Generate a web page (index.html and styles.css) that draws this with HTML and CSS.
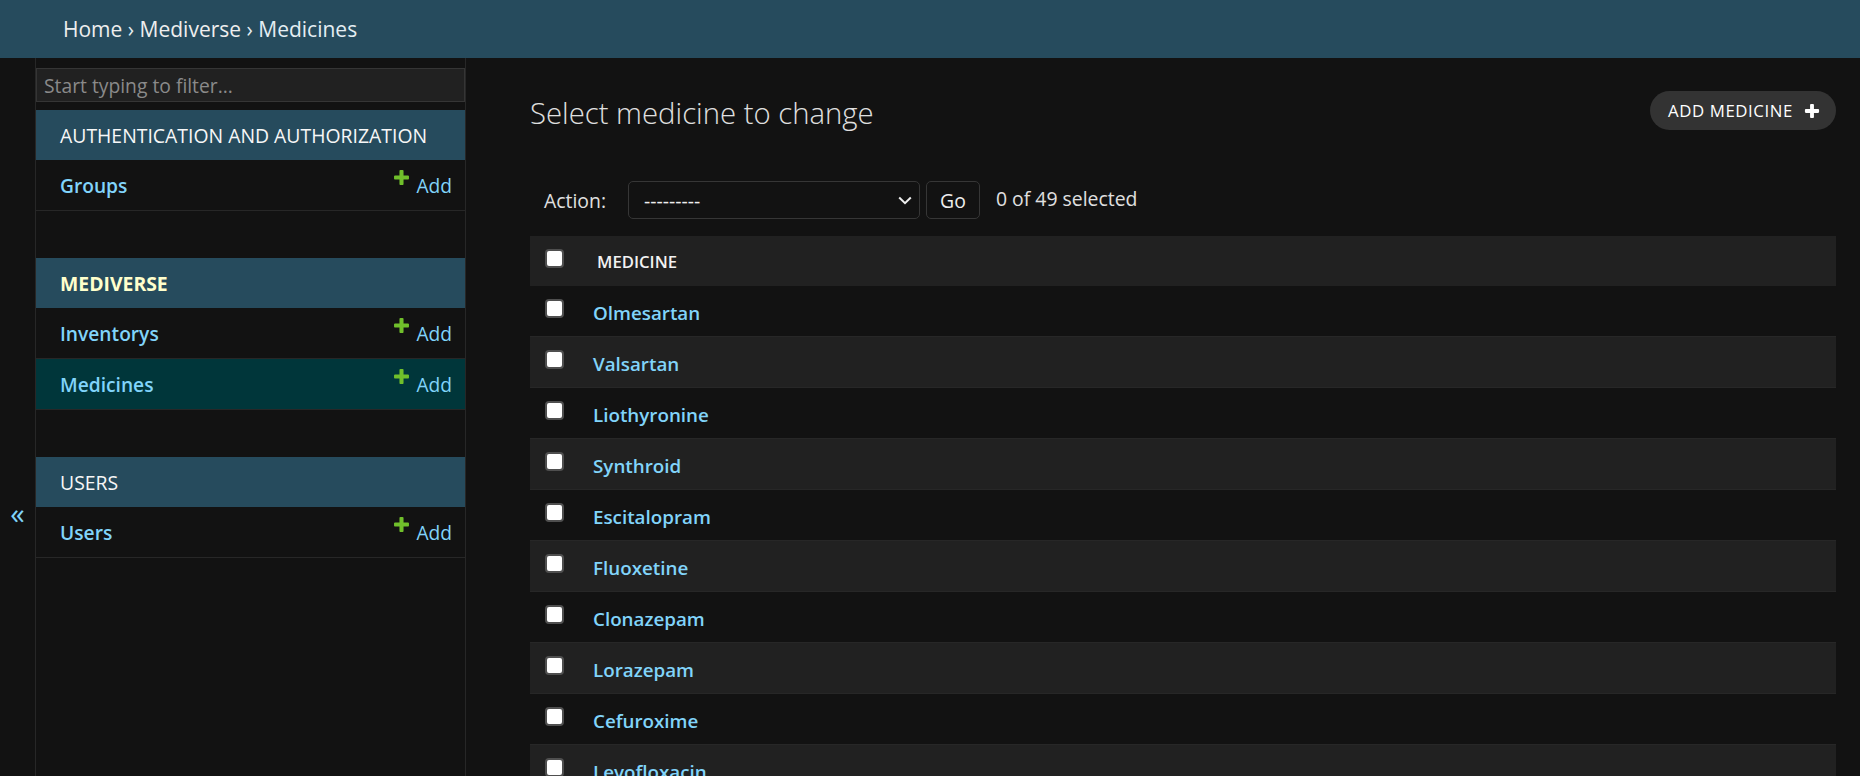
FILE: index.html
```html
<!DOCTYPE html>
<html lang="en">
<head>
<meta charset="utf-8">
<title>Select medicine to change</title>
<link rel="stylesheet" href="styles.css">
</head>
<body>
<div class="breadcrumbs"><a href="#">Home</a> › <a href="#">Mediverse</a> › Medicines</div>
<div class="main">
  <button class="toggle" type="button">«</button>
  <nav class="sidebar">
    <input class="nav-filter" type="search" placeholder="Start typing to filter...">
    <div class="module">
      <div class="caption">AUTHENTICATION AND AUTHORIZATION</div>
      <div class="row"><a class="model" href="#">Groups</a><a class="addlink" href="#"><svg class="plus" viewBox="0 0 1792 1792"><path d="M1600 796v192q0 40-28 68t-68 28h-416v416q0 40-28 68t-68 28h-192q-40 0-68-28t-28-68v-416h-416q-40 0-68-28t-28-68v-192q0-40 28-68t68-28h416v-416q0-40 28-68t68-28h192q40 0 68 28t28 68v416h416q40 0 68 28t28 68z"/></svg>Add</a></div>
    </div>
    <div class="module">
      <div class="caption current">MEDIVERSE</div>
      <div class="row"><a class="model" href="#">Inventorys</a><a class="addlink" href="#"><svg class="plus" viewBox="0 0 1792 1792"><path d="M1600 796v192q0 40-28 68t-68 28h-416v416q0 40-28 68t-68 28h-192q-40 0-68-28t-28-68v-416h-416q-40 0-68-28t-28-68v-192q0-40 28-68t68-28h416v-416q0-40 28-68t68-28h192q40 0 68 28t28 68v416h416q40 0 68 28t28 68z"/></svg>Add</a></div>
      <div class="row selected"><a class="model" href="#">Medicines</a><a class="addlink" href="#"><svg class="plus" viewBox="0 0 1792 1792"><path d="M1600 796v192q0 40-28 68t-68 28h-416v416q0 40-28 68t-68 28h-192q-40 0-68-28t-28-68v-416h-416q-40 0-68-28t-28-68v-192q0-40 28-68t68-28h416v-416q0-40 28-68t68-28h192q40 0 68 28t28 68v416h416q40 0 68 28t28 68z"/></svg>Add</a></div>
    </div>
    <div class="module">
      <div class="caption">USERS</div>
      <div class="row"><a class="model" href="#">Users</a><a class="addlink" href="#"><svg class="plus" viewBox="0 0 1792 1792"><path d="M1600 796v192q0 40-28 68t-68 28h-416v416q0 40-28 68t-68 28h-192q-40 0-68-28t-28-68v-416h-416q-40 0-68-28t-28-68v-192q0-40 28-68t68-28h416v-416q0-40 28-68t68-28h192q40 0 68 28t28 68v416h416q40 0 68 28t28 68z"/></svg>Add</a></div>
    </div>
  </nav>
  <div class="content">
    <div class="content-head">
      <h1>Select medicine to change</h1>
      <a class="addbtn" href="#">Add medicine<svg class="tooltag" viewBox="0 0 1792 1792"><path d="M1600 796v192q0 40-28 68t-68 28h-416v416q0 40-28 68t-68 28h-192q-40 0-68-28t-28-68v-416h-416q-40 0-68-28t-28-68v-192q0-40 28-68t68-28h416v-416q0-40 28-68t68-28h192q40 0 68 28t28 68v416h416q40 0 68 28t28 68z"/></svg></a>
    </div>
    <div class="actions">
      <span class="action-label">Action:</span>
      <div class="select"><span>---------</span><svg class="chev" viewBox="0 0 14 9"><path d="M1.2 1.5 L7 7.2 L12.8 1.5"/></svg></div>
      <div class="go">Go</div>
      <span class="counter">0 of 49 selected</span>
    </div>
    <div class="table">
      <div class="thead"><span class="cb"></span><span class="th">MEDICINE</span></div>
      <div class="tr"><span class="cb"></span><a class="name" href="#">Olmesartan</a></div>
      <div class="tr"><span class="cb"></span><a class="name" href="#">Valsartan</a></div>
      <div class="tr"><span class="cb"></span><a class="name" href="#">Liothyronine</a></div>
      <div class="tr"><span class="cb"></span><a class="name" href="#">Synthroid</a></div>
      <div class="tr"><span class="cb"></span><a class="name" href="#">Escitalopram</a></div>
      <div class="tr"><span class="cb"></span><a class="name" href="#">Fluoxetine</a></div>
      <div class="tr"><span class="cb"></span><a class="name" href="#">Clonazepam</a></div>
      <div class="tr"><span class="cb"></span><a class="name" href="#">Lorazepam</a></div>
      <div class="tr"><span class="cb"></span><a class="name" href="#">Cefuroxime</a></div>
      <div class="tr"><span class="cb"></span><a class="name" href="#">Levofloxacin</a></div>
    </div>
  </div>
</div>
</body>
</html>
```

FILE: styles.css
```css
* { box-sizing: border-box; }
html, body { margin: 0; padding: 0; }
body {
  background: #121212;
  color: #eeeeee;
  font-family: "Open Sans", "Noto Sans", sans-serif;
  height: 776px;
  overflow: hidden;
}
a { text-decoration: none; color: #81d4fa; }

.breadcrumbs {
  height: 58px;
  background: #264b5d;
  padding: 0 63px;
  display: flex;
  align-items: center;
  font-size: 21px;
  color: #e4eef3;
  white-space: pre;
}
.breadcrumbs a { color: #eeeeee; }

.main { display: flex; height: 718px; }

.toggle {
  flex: none;
  width: 36px;
  border: 0;
  border-right: 1px solid #272727;
  background: #121212;
  color: #81d4fa;
  font-family: "Open Sans", sans-serif;
  font-size: 29px;
  line-height: 36px;
  padding: 437px 0 0;
  display: flex;
  justify-content: center;
  align-items: flex-start;
}

.sidebar {
  flex: none;
  width: 430px;
  border-right: 1px solid #272727;
  padding-top: 10px;
}
.nav-filter {
  display: block;
  width: 100%;
  height: 34px;
  margin: 0 0 8px;
  padding: 2px 7px;
  border: 1px solid #353535;
  background: #212121;
  color: #eeeeee;
  font-family: "Open Sans", sans-serif;
  font-size: 19.3px;
  outline: none;
}
.nav-filter::placeholder { color: #8a8a8a; }
.module { margin-bottom: 47px; }
.caption {
  height: 50px;
  background: #264b5d;
  color: #f7f7f7;
  padding: 0 24px;
  display: flex;
  align-items: center;
  font-size: 19.4px;
  font-weight: 400;
}
.caption.current { color: #ffffcc; font-weight: 700; }
.row {
  height: 51px;
  border-bottom: 1px solid #272727;
  display: flex;
  justify-content: space-between;
  align-items: center;
  padding: 0 13px 0 24px;
  font-size: 19.2px;
}
.row.selected { background: #00363a; }
.model { font-weight: 600; }
.addlink { display: flex; align-items: flex-start; }
.plus { width: 19px; height: 19px; margin: -4px 5px 0 0; fill: #70bf2b; }

.content {
  flex: 1;
  min-width: 0;
  padding: 30px 24px 0 64px;
}
.content-head {
  display: flex;
  justify-content: space-between;
  align-items: flex-start;
}
h1 {
  margin: 0;
  font-size: 29.3px;
  font-weight: 300;
  line-height: 50px;
  color: #e0e0e0;
}
.addbtn {
  margin-top: 3px;
  height: 39px;
  border-radius: 20px;
  background: #333333;
  color: #ffffff;
  font-size: 16.8px;
  letter-spacing: 0.6px;
  text-transform: uppercase;
  padding: 0 15px 0 18px;
  display: flex;
  align-items: center;
}
.tooltag { width: 18px; height: 18px; margin-left: 10px; fill: #ffffff; }

.actions {
  margin-top: 43px;
  height: 38px;
  display: flex;
  align-items: center;
  padding-left: 14px;
  font-size: 19.4px;
  color: #e0e0e0;
}
.action-label { width: 84px; }
.select {
  width: 292px;
  height: 38px;
  border: 1px solid #363636;
  border-radius: 5px;
  background: #121212;
  padding: 0 7px 0 15px;
  display: flex;
  justify-content: space-between;
  align-items: center;
  color: #eeeeee;
}
.chev { width: 14px; height: 9px; fill: none; stroke: #eeeeee; stroke-width: 2; }
.go {
  margin-left: 6px;
  width: 54px;
  height: 38px;
  border: 1px solid #363636;
  border-radius: 5px;
  display: flex;
  align-items: center;
  justify-content: center;
  color: #eeeeee;
}
.counter { margin-left: 16px; margin-top: -3px; }

.table { margin-top: 17px; }
.thead {
  height: 50px;
  background: #212121;
  display: flex;
  align-items: flex-start;
}
.tr {
  height: 51px;
  border-bottom: 1px solid #272727;
  display: flex;
  align-items: flex-start;
}
.tr:nth-child(odd) { background: #212121; }
.cb {
  flex: none;
  width: 19px;
  height: 19px;
  margin: 13px 0 0 15px;
  background: #ffffff;
  border: 2px solid #4f4f4f;
  border-radius: 4px;
}
.th {
  margin-left: 33px;
  padding-top: 14px;
  line-height: 24px;
  font-size: 16.7px;
  font-weight: 600;
  color: #f2f2f2;
}
.name {
  margin-left: 29px;
  padding-top: 15px;
  line-height: 24px;
  font-size: 18.8px;
  font-weight: 600;
}
```
